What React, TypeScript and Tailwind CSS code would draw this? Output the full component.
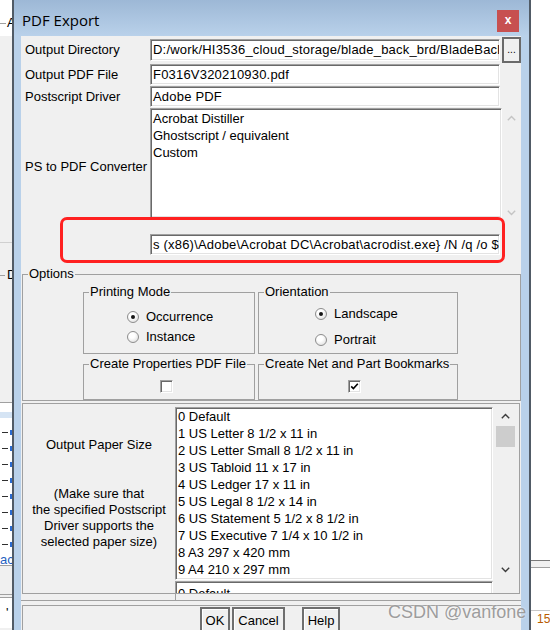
import type { ReactNode } from "react";

const paperSizes = [
  "0 Default",
  "1 US Letter 8 1/2 x 11 in",
  "2 US Letter Small 8 1/2 x 11 in",
  "3 US Tabloid 11 x 17 in",
  "4 US Ledger 17 x 11 in",
  "5 US Legal 8 1/2 x 14 in",
  "6 US Statement 5 1/2 x 8 1/2 in",
  "7 US Executive 7 1/4 x 10 1/2 in",
  "8 A3 297 x 420 mm",
  "9 A4 210 x 297 mm",
];

const sunken =
  "border border-t-[#a0a0a0] border-l-[#a0a0a0] border-r-white border-b-white shadow-[inset_1px_1px_0_#696969,inset_-1px_-1px_0_#e3e3e3]";

function Chevron({ up = false, color }: { up?: boolean; color: string }) {
  return (
    <svg width="9" height="6" viewBox="0 0 9 6" className="block shrink-0">
      <path
        d={up ? "M0.8 5.2L4.5 1.5L8.2 5.2" : "M0.8 0.8L4.5 4.5L8.2 0.8"}
        fill="none"
        stroke={color}
        strokeWidth="1.4"
      />
    </svg>
  );
}

function TextBox({ value, className = "" }: { value: string; className?: string }) {
  return (
    <div className={`flex items-center overflow-hidden whitespace-nowrap bg-white pl-[2px] tracking-[0.2px] ${sunken} ${className}`}>
      {value}
    </div>
  );
}

function Radio({ checked = false }: { checked?: boolean }) {
  return (
    <span className="flex h-[12px] w-[12px] shrink-0 items-center justify-center rounded-full border border-[#8d8d8d] bg-[radial-gradient(circle_at_40%_35%,#ffffff_30%,#d6d6d6_100%)]">
      {checked && <span className="h-[4px] w-[4px] rounded-full bg-[#151515]" />}
    </span>
  );
}

function Checkbox({ checked = false }: { checked?: boolean }) {
  return (
    <span className={`flex h-[13px] w-[13px] items-center justify-center bg-white ${sunken}`}>
      {checked && (
        <svg width="9" height="9" viewBox="0 0 9 9" className="block">
          <path d="M1.2 4.4L3.4 6.6L7.8 1.8" fill="none" stroke="#000" strokeWidth="1.6" />
        </svg>
      )}
    </span>
  );
}

function Group({ title, className = "", children }: { title: string; className?: string; children?: ReactNode }) {
  return (
    <fieldset className={`border border-[#a0a0a0] ${className}`}>
      <legend className="ml-[5px] whitespace-nowrap px-[1px] leading-[16px]">{title}</legend>
      {children}
    </fieldset>
  );
}

function ClassicButton({ label, className = "" }: { label: string; className?: string }) {
  return (
    <button
      type="button"
      className={`flex h-[28px] items-center justify-center border-2 border-[#6e6e6e] bg-[#f0f0f0] shadow-[inset_1px_1px_0_#ffffff] ${className}`}
    >
      {label}
    </button>
  );
}

function LeftStrip() {
  const rows = [0, 1, 2, 3, 4, 5, 6, 7];
  return (
    <div className="flex w-[12px] shrink-0 flex-col overflow-hidden bg-[#f0f0f0]">
      <div className="flex h-[36px] items-center overflow-hidden bg-white pt-[10px]">
        <span className="h-px w-[6px] shrink-0 bg-[#a0a0a0]" />
        <span className="ml-[1px] leading-[16px]">A</span>
      </div>
      <div className="h-[207px] border-b border-[#d0d0d0]" />
      <div className="flex h-[159px] items-start overflow-hidden pt-[24px]">
        <span className="mt-[8px] h-px w-[5px] shrink-0 bg-[#a0a0a0]" />
        <span className="ml-[2px] leading-[16px]">D</span>
      </div>
      <div className="h-px bg-[#a0a0a0]" />
      <div className="h-[9px] bg-white" />
      <div className="h-[6px] bg-[#d5e4f4]" />
      <div className="flex h-[137px] flex-col bg-white pt-[6px]">
        {rows.map((r) => (
          <div key={r} className="flex h-[16px] items-center justify-between">
            <span className="ml-[2px] h-px w-[6px] bg-[#303030]" />
            <span className="h-[5px] w-[2px] bg-[#2a6bd0]" />
          </div>
        ))}
      </div>
      <div className="h-[10px] overflow-hidden bg-white text-[13px] leading-[10px] text-[#1f5fbf]">ac</div>
      <div className="h-px bg-[#a0a0a0]" />
      <div className="h-[29px] border-b border-[#a0a0a0]" />
      <div className="h-[3px] border-b border-[#a0a0a0]" />
      <div className="flex h-[30px] items-center bg-white pl-[6px] leading-[14px]">'</div>
    </div>
  );
}

function RightStrip() {
  return (
    <div className="flex w-[19px] shrink-0 flex-col overflow-hidden bg-white">
      <div className="h-[560px]" />
      <div className="h-px bg-[#7a7a7a]" />
      <div className="h-[6px] bg-[#f0f0f0]" />
      <div className="h-px bg-[#a0a0a0]" />
      <div className="h-[42px]" />
      <div className="h-px bg-[#c8c8c8]" />
      <div className="whitespace-nowrap pl-[6px] pt-[1px] text-[12px] leading-[14px] text-[#b85c00]">15</div>
    </div>
  );
}

export default function App() {
  return (
    <div className="relative flex h-[630px] w-[550px] overflow-hidden bg-white font-['Liberation_Sans',Arial,sans-serif] text-[13px] text-black">
      <LeftStrip />

      <div className="flex w-[519px] shrink-0 flex-col border-x-2 border-[#515b66] bg-[#b9d1ea]">
        <div className="flex h-[36px] shrink-0 bg-[linear-gradient(180deg,#9db8d6_0%,#b9d1ea_100%)]">
          <div className="pl-[8px] pt-[10px] font-['Open_Sans','Noto_Sans',sans-serif] text-[15px] leading-[20px]">
            PDF Export
          </div>
          <button
            type="button"
            className="ml-auto mr-[10px] mt-[10px] flex h-[22px] w-[22px] items-center justify-center bg-[#c75050] pb-[2px] text-[12px] font-bold leading-none text-white"
          >
            x
          </button>
        </div>

        <div className="relative ml-[7px] mr-[8px] flex-1 overflow-hidden bg-[#f0f0f0] pt-[1px]">
          <div className="flex h-[26px] items-center">
            <div className="w-[129px] shrink-0 pl-[4px]">Output Directory</div>
            <TextBox
              value="D:/work/HI3536_cloud_storage/blade_back_brd/BladeBack"
              className="h-[22px] w-[350px] shrink-0"
            />
            <button
              type="button"
              className="ml-[2px] flex h-[26px] w-[19px] shrink-0 items-end justify-center overflow-hidden border-2 border-[#6a6a6a] bg-[#f0f0f0] pb-[6px] text-[10px] leading-[10px]"
            >
              ...
            </button>
          </div>

          <div className="mt-[1px] flex h-[21px] items-center">
            <div className="w-[129px] shrink-0 pl-[4px]">Output PDF File</div>
            <TextBox value="F0316V320210930.pdf" className="h-full w-[350px] shrink-0" />
          </div>

          <div className="mt-[1px] flex h-[21px] items-center">
            <div className="w-[129px] shrink-0 pl-[4px]">Postscript Driver</div>
            <TextBox value="Adobe PDF" className="h-full w-[350px] shrink-0" />
          </div>

          <div className="mt-[1px] flex h-[110px]">
            <div className="flex w-[129px] shrink-0 items-center pl-[4px] pt-[8px]">PS to PDF Converter</div>
            <div className={`w-[352px] shrink-0 bg-white pl-[2px] pt-[1px] leading-[17px] ${sunken}`}>
              <div>Acrobat Distiller</div>
              <div>Ghostscript / equivalent</div>
              <div>Custom</div>
            </div>
            <div className="flex w-[18px] flex-col items-center justify-between pb-[2px] pt-[7px]">
              <Chevron up color="#c4c4c4" />
              <Chevron color="#c4c4c4" />
            </div>
          </div>

          <div className="mt-[16px] flex h-[21px]">
            <TextBox
              value={"s (x86)\\Adobe\\Acrobat DC\\Acrobat\\acrodist.exe} /N /q /o $"}
              className="ml-[129px] h-full w-[350px] shrink-0"
            />
          </div>

          <fieldset className="ml-[1px] mt-[11px] border border-[#a0a0a0]">
            <legend className="ml-[5px] px-[1px] leading-[16px]">Options</legend>
            <div className="ml-[60px] mt-[2px] grid w-[375px] grid-cols-[172px_200px] gap-x-[3px] gap-y-[2px]">
              <Group title="Printing Mode" className="h-[70px]">
                <div className="ml-[43px] mt-[8px] flex h-[17px] items-center gap-[7px]">
                  <Radio checked />
                  Occurrence
                </div>
                <div className="ml-[43px] mt-[3px] flex h-[17px] items-center gap-[7px]">
                  <Radio />
                  Instance
                </div>
              </Group>
              <Group title="Orientation" className="h-[70px]">
                <div className="ml-[56px] mt-[5px] flex h-[17px] items-center gap-[7px]">
                  <Radio checked />
                  Landscape
                </div>
                <div className="ml-[56px] mt-[9px] flex h-[17px] items-center gap-[7px]">
                  <Radio />
                  Portrait
                </div>
              </Group>
              <Group title="Create Properties PDF File" className="h-[44px]">
                <div className="ml-[76px] mt-[8px] flex">
                  <Checkbox />
                </div>
              </Group>
              <Group title="Create Net and Part Bookmarks" className="h-[44px]">
                <div className="ml-[89px] mt-[8px] flex">
                  <Checkbox checked />
                </div>
              </Group>
            </div>
          </fieldset>

          <div className="ml-[1px] mr-[1px] mt-[2px] flex h-[191px] overflow-hidden border border-[#a0a0a0]">
            <div className="w-[152px] shrink-0 whitespace-nowrap pt-[33px] text-center leading-[16px]">
              <div>Output Paper Size</div>
              <div className="mt-[33px]">
                (Make sure that
                <br />
                the specified Postscript
                <br />
                Driver supports the
                <br />
                selected paper size)
              </div>
            </div>
            <div className="flex flex-col pt-[3px]">
              <div className="flex shrink-0">
                <div className={`h-[173px] w-[318px] shrink-0 overflow-hidden whitespace-nowrap bg-white pl-[2px] leading-[17px] ${sunken}`}>
                  {paperSizes.map((size) => (
                    <div key={size}>{size}</div>
                  ))}
                </div>
                <div className="flex h-[173px] w-[22px] flex-col pl-[3px]">
                  <div className="flex w-[19px] flex-col items-center pt-[6px]">
                    <Chevron up color="#3c3c3c" />
                  </div>
                  <div className="mt-[7px] h-[21px] w-[19px] bg-[#cdcdcd]" />
                  <div className="flex-1" />
                  <div className="flex w-[19px] flex-col items-center pb-[7px]">
                    <Chevron color="#3c3c3c" />
                  </div>
                </div>
              </div>
              <div className={`mt-[1px] h-[20px] w-[318px] shrink-0 bg-white pl-[2px] pt-[3px] leading-[17px] ${sunken}`}>
                0 Default
              </div>
            </div>
          </div>

          <div className="flex h-[7px] border-b border-[#a0a0a0]">
            <div className="ml-[154px] h-full w-[318px] border-l border-[#a0a0a0]" />
          </div>

          <div className="ml-[1px] mt-[4px] flex border-l border-t border-[#a0a0a0] pl-[177px] pt-[1px]">
            <ClassicButton label="OK" className="w-[30px]" />
            <ClassicButton label="Cancel" className="ml-[2px] w-[53px]" />
            <ClassicButton label="Help" className="ml-[17px] w-[38px]" />
          </div>

          <div className="pointer-events-none absolute left-[39px] top-[181px] h-[46px] w-[445px] rounded-[7px] border-[3px] border-[#ff2121]" />
        </div>
      </div>

      <RightStrip />

      <div className="pointer-events-none absolute left-[388px] top-[601px] whitespace-nowrap text-[18px] leading-[22px] text-[#9d9d9d] [text-shadow:0_0_2px_#ffffff]">
        CSDN @vanfone
      </div>
    </div>
  );
}
